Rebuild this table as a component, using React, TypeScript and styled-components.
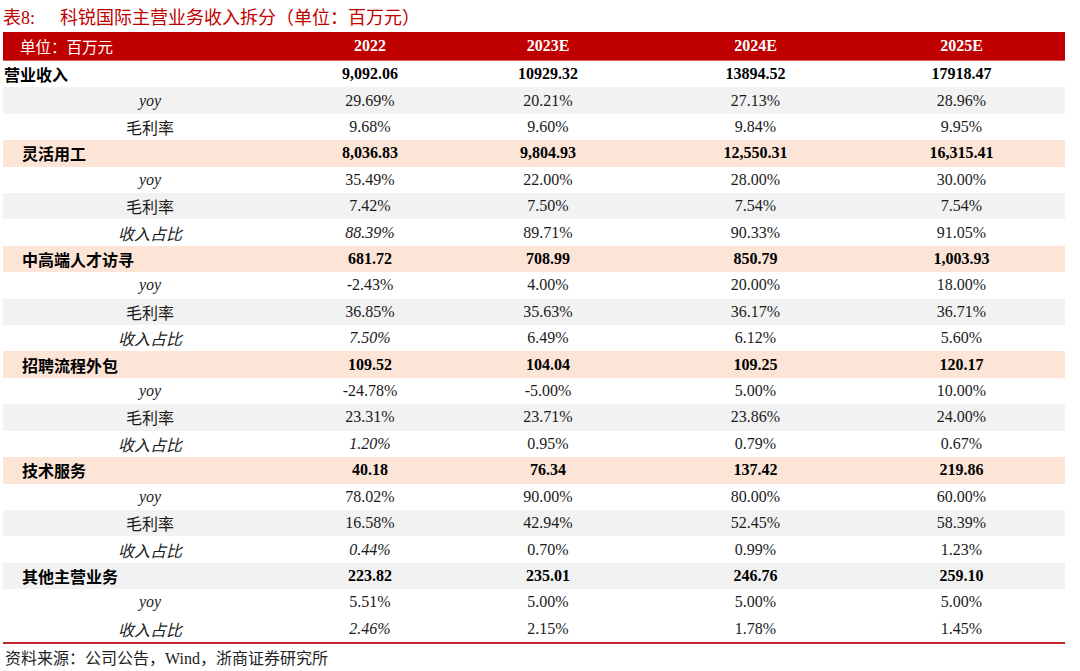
import React from "react";
import styled, { createGlobalStyle } from "styled-components";

const GlobalStyle = createGlobalStyle`
  html, body { margin: 0; padding: 0; background: #ffffff; }
  body {
    font-family: "Liberation Serif", "Noto Sans CJK SC", serif;
    color: #000000;
  }
`;

const Page = styled.div`
  width: 1080px;
  height: 671px;
  box-sizing: border-box;
  padding: 0 15px 0 3px;
  display: flex;
  flex-direction: column;
`;

const Title = styled.div`
  height: 32px;
  display: flex;
  align-items: center;
  color: #c00000;
  font-size: 18px;
  font-family: "Liberation Serif", "Noto Sans CJK SC", serif;
  white-space: nowrap;
`;

const TitleNo = styled.span`
  width: 57px;
  flex: none;
`;

const Table = styled.div`
  width: 1062px;
  display: grid;
  grid-template-columns: 294px 146px 210px 205px 207px;
  border-bottom: 2px solid #c0262c;
`;

const HeadCell = styled.div<{ $left?: boolean }>`
  height: 28px;
  background: #c00000;
  color: #ffffff;
  display: flex;
  align-items: center;
  justify-content: ${(p) => (p.$left ? "flex-start" : "center")};
  padding-left: ${(p) => (p.$left ? "17px" : "0")};
  font-size: ${(p) => (p.$left ? "15.5px" : "16px")};
  font-weight: ${(p) => (p.$left ? 400 : 700)};
  border-bottom: 1px solid #d85a5a;
`;

type Bg = "white" | "gray" | "pink";
const bgColor: Record<Bg, string> = {
  white: "#ffffff",
  gray: "#f2f2f2",
  pink: "#fce4d6",
};

type Kind = "total" | "group" | "sub";

const LabelCell = styled.div<{ $bg: Bg; $kind: Kind; $italic?: boolean }>`
  height: 26.41px;
  background: ${(p) => bgColor[p.$bg]};
  display: flex;
  align-items: center;
  justify-content: ${(p) => (p.$kind === "sub" ? "center" : "flex-start")};
  padding-left: ${(p) => (p.$kind === "group" ? "19px" : p.$kind === "total" ? "1px" : "0")};
  font-family: "Liberation Serif", "Noto Sans CJK SC", serif;
  font-size: 16px;
  font-weight: ${(p) => (p.$kind === "sub" ? 400 : 700)};
  font-style: ${(p) => (p.$italic ? "italic" : "normal")};
  color: ${(p) => (p.$kind === "sub" ? "#1a1a1a" : "#000000")};
  white-space: nowrap;
`;

const ValueCell = styled.div<{ $bg: Bg; $bold?: boolean; $italic?: boolean }>`
  height: 26.41px;
  background: ${(p) => bgColor[p.$bg]};
  display: flex;
  align-items: center;
  justify-content: center;
  font-size: 16px;
  font-weight: ${(p) => (p.$bold ? 700 : 400)};
  font-style: ${(p) => (p.$italic ? "italic" : "normal")};
  color: ${(p) => (p.$bold ? "#000000" : "#1a1a1a")};
`;

const Source = styled.div`
  padding-left: 2px;
  margin-top: 2px;
  height: 22px;
  display: flex;
  align-items: center;
  font-size: 16px;
  color: #222222;
  white-space: nowrap;
`;

type Row = {
  label: string;
  kind: Kind;
  bg: Bg;
  values: string[];
  share?: boolean;
};

const rows: Row[] = [
  { label: "营业收入", kind: "total", bg: "white", values: ["9,092.06", "10929.32", "13894.52", "17918.47"] },
  { label: "yoy", kind: "sub", bg: "gray", values: ["29.69%", "20.21%", "27.13%", "28.96%"] },
  { label: "毛利率", kind: "sub", bg: "white", values: ["9.68%", "9.60%", "9.84%", "9.95%"] },
  { label: "灵活用工", kind: "group", bg: "pink", values: ["8,036.83", "9,804.93", "12,550.31", "16,315.41"] },
  { label: "yoy", kind: "sub", bg: "white", values: ["35.49%", "22.00%", "28.00%", "30.00%"] },
  { label: "毛利率", kind: "sub", bg: "gray", values: ["7.42%", "7.50%", "7.54%", "7.54%"] },
  { label: "收入占比", kind: "sub", bg: "white", share: true, values: ["88.39%", "89.71%", "90.33%", "91.05%"] },
  { label: "中高端人才访寻", kind: "group", bg: "pink", values: ["681.72", "708.99", "850.79", "1,003.93"] },
  { label: "yoy", kind: "sub", bg: "white", values: ["-2.43%", "4.00%", "20.00%", "18.00%"] },
  { label: "毛利率", kind: "sub", bg: "gray", values: ["36.85%", "35.63%", "36.17%", "36.71%"] },
  { label: "收入占比", kind: "sub", bg: "white", share: true, values: ["7.50%", "6.49%", "6.12%", "5.60%"] },
  { label: "招聘流程外包", kind: "group", bg: "pink", values: ["109.52", "104.04", "109.25", "120.17"] },
  { label: "yoy", kind: "sub", bg: "white", values: ["-24.78%", "-5.00%", "5.00%", "10.00%"] },
  { label: "毛利率", kind: "sub", bg: "gray", values: ["23.31%", "23.71%", "23.86%", "24.00%"] },
  { label: "收入占比", kind: "sub", bg: "white", share: true, values: ["1.20%", "0.95%", "0.79%", "0.67%"] },
  { label: "技术服务", kind: "group", bg: "pink", values: ["40.18", "76.34", "137.42", "219.86"] },
  { label: "yoy", kind: "sub", bg: "white", values: ["78.02%", "90.00%", "80.00%", "60.00%"] },
  { label: "毛利率", kind: "sub", bg: "gray", values: ["16.58%", "42.94%", "52.45%", "58.39%"] },
  { label: "收入占比", kind: "sub", bg: "white", share: true, values: ["0.44%", "0.70%", "0.99%", "1.23%"] },
  { label: "其他主营业务", kind: "group", bg: "gray", values: ["223.82", "235.01", "246.76", "259.10"] },
  { label: "yoy", kind: "sub", bg: "white", values: ["5.51%", "5.00%", "5.00%", "5.00%"] },
  { label: "收入占比", kind: "sub", bg: "white", share: true, values: ["2.46%", "2.15%", "1.78%", "1.45%"] },
];

const years = ["2022", "2023E", "2024E", "2025E"];

export default function App() {
  return (
    <>
      <GlobalStyle />
      <Page>
        <Title>
          <TitleNo>表8:</TitleNo>
          <span>科锐国际主营业务收入拆分（单位：百万元）</span>
        </Title>
        <Table>
          <HeadCell $left>单位：百万元</HeadCell>
          {years.map((y) => (
            <HeadCell key={y}>{y}</HeadCell>
          ))}
          {rows.map((r, i) => (
            <React.Fragment key={i}>
              <LabelCell $bg={r.bg} $kind={r.kind} $italic={r.label === "yoy" || r.share}>
                {r.label}
              </LabelCell>
              {r.values.map((v, j) => (
                <ValueCell
                  key={j}
                  $bg={r.bg}
                  $bold={r.kind !== "sub"}
                  $italic={!!r.share && j === 0}
                >
                  {v}
                </ValueCell>
              ))}
            </React.Fragment>
          ))}
        </Table>
        <Source>资料来源：公司公告，Wind，浙商证券研究所</Source>
      </Page>
    </>
  );
}
